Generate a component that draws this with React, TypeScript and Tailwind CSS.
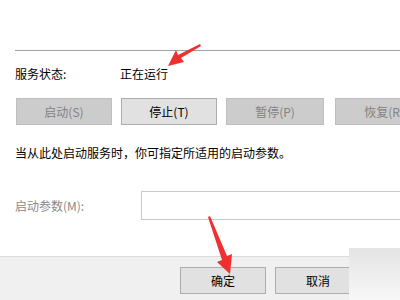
export default function App() {
  const font = { fontFamily: '"Noto Sans CJK SC", "Microsoft YaHei", sans-serif' };
  const disabled = "shrink-0 h-[27px] bg-[#cccccc] border border-[#bfbfbf] text-[#838383]";
  const enabled = "shrink-0 h-[27px] bg-[#e1e1e1] border border-[#adadad]";
  return (
    <div
      className="relative w-[400px] h-[300px] overflow-hidden bg-white text-[12px] text-black flex flex-col"
      style={font}
    >
      <div className="h-[51px] ml-[15px] border-b border-[#a0a0a0] shrink-0" />

      <div className="flex items-center pl-[15px] pt-[15px] leading-[16px]">
        <span className="w-[105px] shrink-0">服务状态:</span>
        <span>正在运行</span>
      </div>

      <div className="flex pl-[16px] mt-[16px] gap-[9px]">
        <button className={`w-[96px] ${disabled}`}>启动(S)</button>
        <button className={`w-[96px] ${enabled}`}>停止(T)</button>
        <button className={`w-[98px] ${disabled}`}>暂停(P)</button>
        <button className={`ml-[2px] w-[98px] ${disabled}`}>恢复(R)</button>
      </div>

      <p className="pl-[15px] mt-[20px] leading-[16px]">当从此处启动服务时，你可指定所适用的启动参数。</p>

      <div className="flex items-center pl-[15px] mt-[30px]">
        <span className="w-[126px] shrink-0 text-[#8a8a8a]">启动参数(M):</span>
        <div className="h-[29px] w-[280px] shrink-0 border border-[#cacaca] bg-white" />
      </div>

      <div className="mt-[36px] flex-1 border-t border-[#dcdcdc] bg-[#f0f0f0] pt-[10px] flex pl-[180px] gap-[9px]">
        <button className={`w-[86px] ${enabled}`}>确定</button>
        <button className={`w-[86px] ${enabled}`}>取消</button>
      </div>

      <div className="absolute left-[349px] top-[248px] w-[51px] h-[52px] bg-gradient-to-b from-[#e4e4e4] to-[#f7f7f7]" />

      <svg className="absolute left-0 top-0 pointer-events-none" width="400" height="300">
        <polygon points="168,66 176,50 178,55 200,44 201,46 181,58 184,62" fill="#f03030" />
        <polygon points="208,217 210,216 227,256 232,254 230,274 217,262 222,260" fill="#f03030" />
      </svg>
    </div>
  );
}
